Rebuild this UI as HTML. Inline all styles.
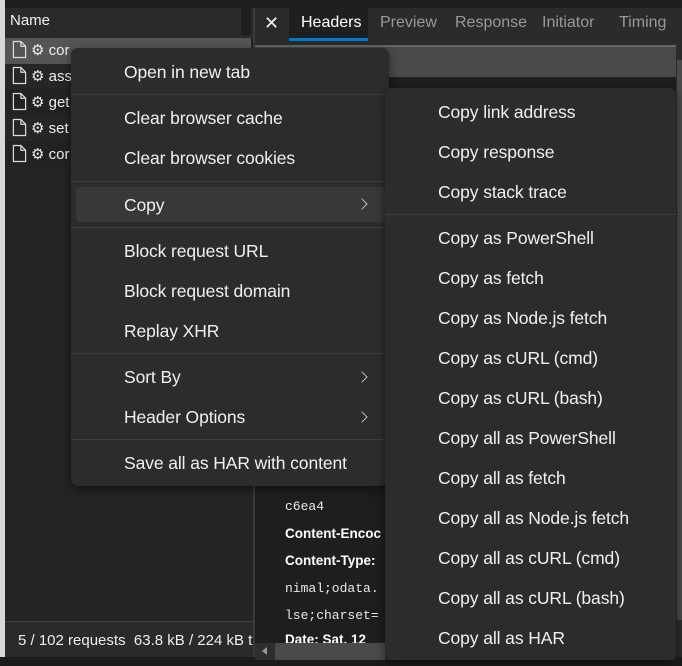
<!DOCTYPE html>
<html><head><meta charset="utf-8"><style>
*{margin:0;padding:0;box-sizing:border-box}
body{width:682px;height:666px;background:#242424;position:relative;overflow:hidden;font-family:"Liberation Sans",sans-serif;color:#e8e8e8}
.a{position:absolute}
.t{position:absolute;font-size:17.5px;line-height:20px;color:#f0f0f0;white-space:nowrap;letter-spacing:-0.1px}
.sep{position:absolute;height:1px;background:#3e3e3e}
.mono{font-family:"Liberation Mono",monospace;font-size:13px;color:#e8e8e8;position:absolute;white-space:nowrap}
.b{font-weight:bold;font-size:13.5px;color:#fff;position:absolute;white-space:nowrap}
.chev{position:absolute;width:8px;height:8px;border-right:1.5px solid #bbb;border-top:1.5px solid #bbb;transform:rotate(45deg)}
.fr{position:absolute;left:12px;height:22px;font-size:15px;color:#eee;line-height:22px;white-space:nowrap}
.fr svg{vertical-align:-4px;margin-right:4px}
</style></head><body>
<div class="a" style="left:0;top:0;width:682px;height:8px;background:#1e1e1e"></div>
<div class="a" style="left:0;top:0;width:5px;height:666px;background:#d8d8d8"></div>
<div class="a" style="left:5px;top:8px;width:248px;height:30px;background:#2a2a2a"></div>
<div class="a" style="left:241px;top:5px;width:10px;height:30px;background:#1e1e1e"></div>
<div class="a" style="left:10px;top:12px;font-size:15px;color:#f0f0f0">Name</div>
<div class="a" style="left:5px;top:38px;width:246px;height:26px;background:#555"></div>
<div class="a" style="left:5px;top:64px;width:246px;height:104px;background:#262626"></div>
<div class="a" style="left:5px;top:89px;width:246px;height:26px;background:#222"></div>
<div class="a" style="left:5px;top:141px;width:246px;height:26px;background:#222"></div>
<div class="a" style="left:253px;top:8px;width:2px;height:650px;background:#3a3a3a"></div>
<svg width="0" height="0" style="position:absolute"><defs><symbol id="f" viewBox="0 0 16 20"><path d="M1.5 1.5h8l5 5v12h-13z M9.5 1.5v5h5" fill="none" stroke="#ddd" stroke-width="1.3"/></symbol></defs></svg>
<div class="fr" style="top:40px"><svg width="15" height="19"><use href="#f"/></svg>⚙ cor</div>
<div class="fr" style="top:66px"><svg width="15" height="19"><use href="#f"/></svg>⚙ ass</div>
<div class="fr" style="top:92px"><svg width="15" height="19"><use href="#f"/></svg>⚙ get</div>
<div class="fr" style="top:118px"><svg width="15" height="19"><use href="#f"/></svg>⚙ set</div>
<div class="fr" style="top:144px"><svg width="15" height="19"><use href="#f"/></svg>⚙ cor</div>
<div class="a" style="left:5px;top:621px;width:248px;height:1px;background:#444"></div>
<div class="a" style="left:5px;top:622px;width:248px;height:35px;background:#2a2a2a"></div>
<div class="a" style="left:18px;top:632px;font-size:15px;color:#eee;white-space:nowrap;width:235px;overflow:hidden">5 / 102 requests &nbsp;63.8 kB / 224 kB tr</div>
<div class="a" style="left:0;top:657px;width:682px;height:9px;background:#1a1a1a"></div>
<div class="a" style="left:255px;top:8px;width:427px;height:37px;background:#2b2b2b"></div>
<div class="a" style="left:264px;top:13px;font-size:18px;color:#eee">✕</div>
<div class="a" style="left:289px;top:6px;width:79px;height:33px;background:#1f1f1f"></div>
<div class="a" style="left:289px;top:38px;width:79px;height:3px;background:#0078d4"></div>
<div class="a" style="left:301px;top:14px;font-size:16px;color:#fff">Headers</div>
<div class="a" style="left:380px;top:14px;font-size:16px;color:#999">Preview</div>
<div class="a" style="left:455px;top:14px;font-size:16px;color:#999">Response</div>
<div class="a" style="left:542px;top:14px;font-size:16px;color:#999">Initiator</div>
<div class="a" style="left:619px;top:14px;font-size:16px;color:#999">Timing</div>
<div class="a" style="left:255px;top:45px;width:421px;height:2px;background:#666"></div>
<div class="a" style="left:255px;top:47px;width:421px;height:30px;background:#4a4a4a"></div>
<div class="a" style="left:255px;top:77px;width:421px;height:566px;background:#1e1e1e"></div>
<div class="a" style="left:676px;top:45px;width:6px;height:612px;background:#2b2b2b"></div>
<div class="a" style="left:677px;top:60px;width:5px;height:560px;background:#4a4a4a"></div>
<div class="mono" style="left:285px;top:499px">c6ea4</div>
<div class="b" style="left:285px;top:526px">Content-Encoc</div>
<div class="b" style="left:285px;top:553px">Content-Type:</div>
<div class="mono" style="left:285px;top:581px">nimal;odata.</div>
<div class="mono" style="left:285px;top:608px">lse;charset=</div>
<div class="b" style="left:285px;top:632px;height:11px;overflow:hidden">Date: Sat, 12</div>
<div class="a" style="left:255px;top:643px;width:421px;height:17px;background:#2e2e2e"></div>
<div class="a" style="left:275px;top:643px;width:110px;height:17px;background:#4a4a4a"></div>
<div class="a" style="left:262px;top:647px;width:0;height:0;border-top:4px solid transparent;border-bottom:4px solid transparent;border-right:5px solid #999"></div>
<div class="a" style="left:71px;top:48px;width:318px;height:438px;background:#2c2c2c;border-radius:7px;box-shadow:0 3px 10px rgba(0,0,0,.5)"></div>
<div class="t" style="left:124px;top:62px">Open in new tab</div>
<div class="sep" style="left:71px;top:94px;width:318px"></div>
<div class="t" style="left:124px;top:108px">Clear browser cache</div>
<div class="t" style="left:124px;top:148px">Clear browser cookies</div>
<div class="sep" style="left:71px;top:181px;width:318px"></div>
<div class="a" style="left:76px;top:187px;width:309px;height:35px;background:#383838;border-radius:4px"></div>
<div class="t" style="left:124px;top:195px">Copy</div>
<div class="chev" style="left:358px;top:200px"></div>
<div class="sep" style="left:71px;top:227px;width:318px"></div>
<div class="t" style="left:124px;top:241px">Block request URL</div>
<div class="t" style="left:124px;top:281px">Block request domain</div>
<div class="t" style="left:124px;top:321px">Replay XHR</div>
<div class="sep" style="left:71px;top:353px;width:318px"></div>
<div class="t" style="left:124px;top:367px">Sort By</div>
<div class="chev" style="left:358px;top:373px"></div>
<div class="t" style="left:124px;top:407px">Header Options</div>
<div class="chev" style="left:358px;top:413px"></div>
<div class="sep" style="left:71px;top:439px;width:318px"></div>
<div class="t" style="left:124px;top:453px">Save all as HAR with content</div>
<div class="a" style="left:385px;top:88px;width:291px;height:572px;background:#2c2c2c;border-radius:7px;box-shadow:0 3px 10px rgba(0,0,0,.5)"></div>
<div class="t" style="left:438px;top:102px">Copy link address</div>
<div class="t" style="left:438px;top:142px">Copy response</div>
<div class="t" style="left:438px;top:182px">Copy stack trace</div>
<div class="sep" style="left:385px;top:214px;width:291px"></div>
<div class="t" style="left:438px;top:228px">Copy as PowerShell</div>
<div class="t" style="left:438px;top:268px">Copy as fetch</div>
<div class="t" style="left:438px;top:308px">Copy as Node.js fetch</div>
<div class="t" style="left:438px;top:348px">Copy as cURL (cmd)</div>
<div class="t" style="left:438px;top:388px">Copy as cURL (bash)</div>
<div class="t" style="left:438px;top:428px">Copy all as PowerShell</div>
<div class="t" style="left:438px;top:468px">Copy all as fetch</div>
<div class="t" style="left:438px;top:508px">Copy all as Node.js fetch</div>
<div class="t" style="left:438px;top:548px">Copy all as cURL (cmd)</div>
<div class="t" style="left:438px;top:588px">Copy all as cURL (bash)</div>
<div class="t" style="left:438px;top:628px">Copy all as HAR</div>
</body></html>
